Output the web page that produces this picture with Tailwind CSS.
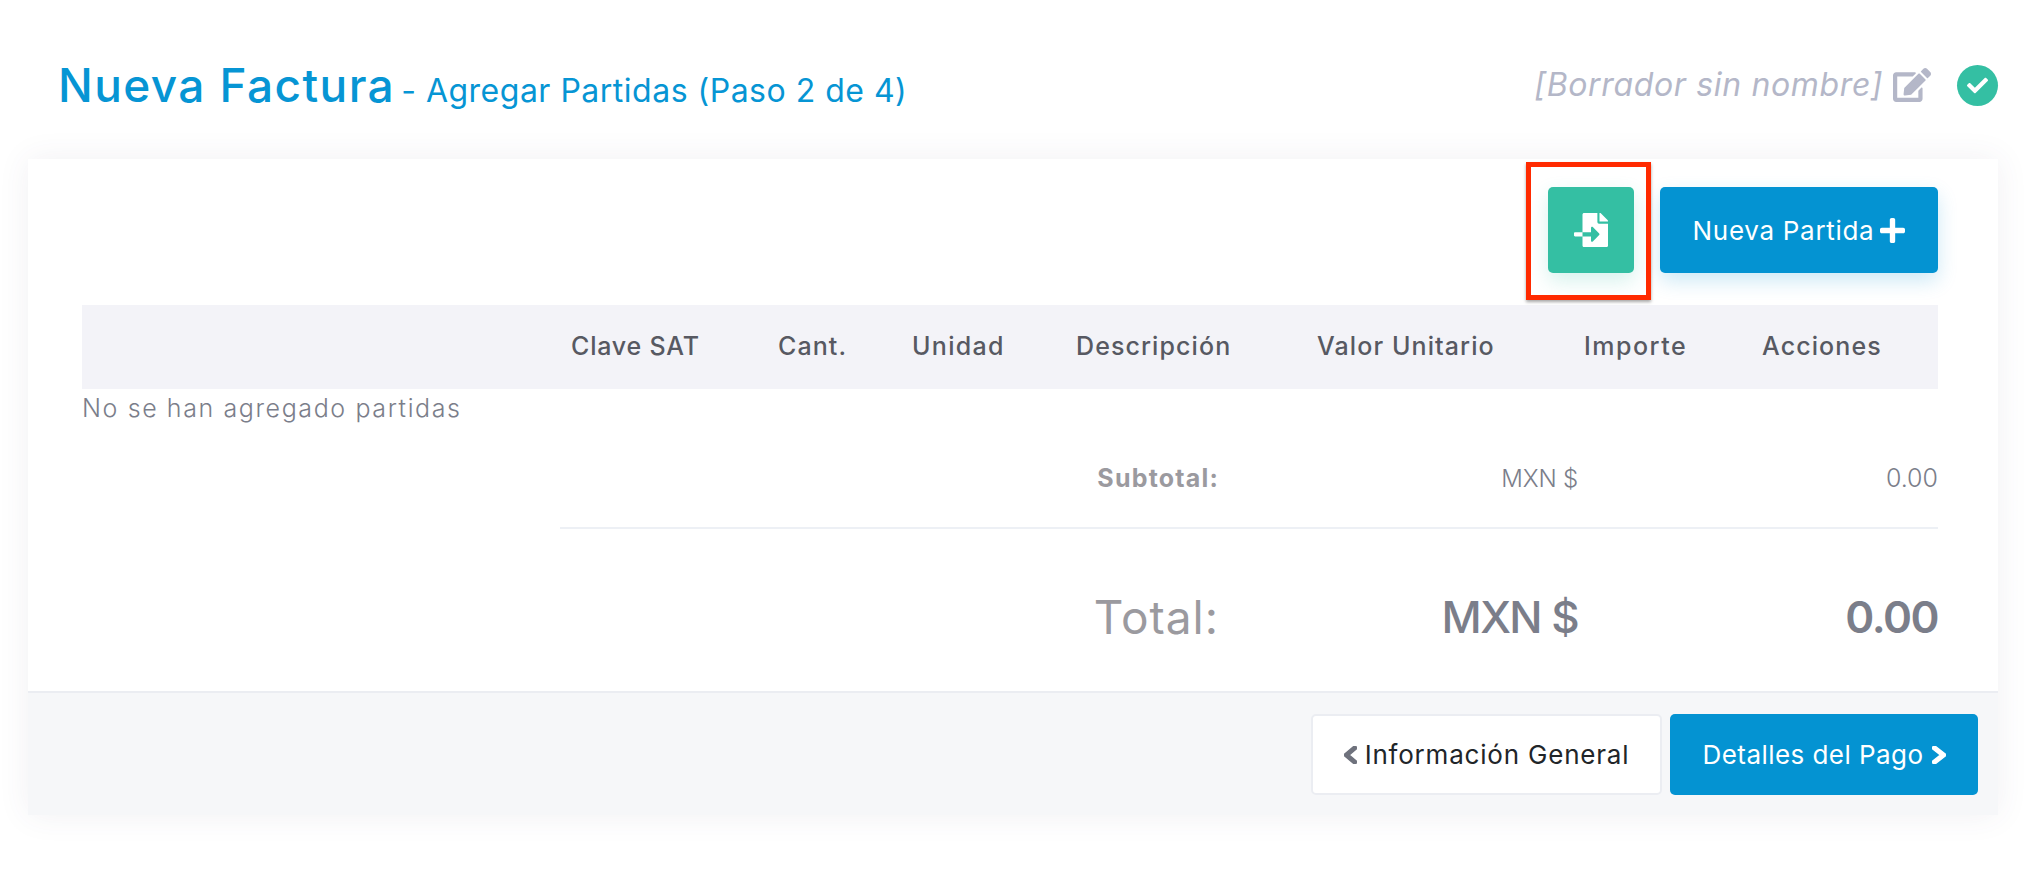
<!DOCTYPE html>
<html lang="es">
<head>
  <meta charset="UTF-8" />
  <title>Nueva Factura</title>
  <script src="https://cdn.jsdelivr.net/npm/@tailwindcss/browser@4"></script>
</head>
<body class="bg-white font-[Inter,sans-serif] relative h-[882px] overflow-hidden">
  <!-- encabezado -->
  <div class="h-[159px] pl-[58px] pr-[40px] pt-[60px] flex items-start justify-between">
    <div class="flex items-baseline text-[#0695d4] h-[50px]">
      <h1 class="text-[46px] leading-[50px] font-medium tracking-[1.4px]">Nueva Factura</h1>
      <span class="text-[32px] ml-[6px] tracking-[0.5px]">- Agregar Partidas (Paso 2 de 4)</span>
    </div>
    <div class="flex items-center h-[50px]">
      <span class="text-[32px] italic text-[#b4b7c8] tracking-[0.65px]">[Borrador sin nombre]</span>
      <svg class="w-[38px] h-[34px] ml-[10px] fill-[#b4b7c8]" viewBox="0 0 576 512"><path d="M402.6 83.2l90.2 90.2c3.8 3.8 3.8 10 0 13.8L274.4 405.6l-92.8 10.3c-12.4 1.4-22.9-9.1-21.5-21.5l10.3-92.8L388.8 83.2c3.8-3.8 10-3.8 13.8 0zm162-22.9l-48.8-48.8c-15.2-15.2-39.9-15.2-55.2 0l-35.4 35.4c-3.8 3.8-3.8 10 0 13.8l90.2 90.2c3.8 3.8 10 3.8 13.8 0l35.4-35.4c15.2-15.3 15.2-40 0-55.2zM384 346.2V448H64V128h229.8c3.2 0 6.2-1.3 8.5-3.5l40-40c7.6-7.6 2.2-20.5-8.5-20.5H48C21.5 64 0 85.5 0 112v352c0 26.5 21.5 48 48 48h352c26.5 0 48-21.5 48-48V306.2c0-10.7-12.9-16-20.5-8.5l-40 40c-2.2 2.3-3.5 5.3-3.5 8.5z"/></svg>
      <span class="w-[41px] h-[41px] ml-[26px] rounded-full bg-[#34bfa3] flex items-center justify-center">
        <svg class="w-[21px] h-[21px] fill-white" viewBox="0 0 512 512"><path d="M173.898 439.404l-166.4-166.4c-9.997-9.997-9.997-26.206 0-36.204l36.203-36.204c9.997-9.998 26.206-9.998 36.204 0L192 312.69 432.095 72.596c9.997-9.997 26.206-9.997 36.204 0l36.203 36.204c9.997 9.997 9.997 26.206 0 36.204l-294.4 294.401c-9.998 9.997-26.207 9.997-36.204-.001z"/></svg>
      </span>
    </div>
  </div>

  <!-- tarjeta -->
  <div class="ml-[28px] w-[1970px] h-[656px] bg-white flex flex-col shadow-[0_0_30px_rgba(82,63,105,0.08)]">
    <div class="h-[534px] pt-[28px] pl-[54px] pr-[60px] border-b-2 border-[#ebedf2]">
      <div class="flex justify-end gap-[26px]">
        <button class="w-[86px] h-[86px] rounded-[5px] bg-[#34bfa3] flex items-center justify-center shadow-[0_8px_20px_rgba(52,191,163,0.2)]">
          <svg class="w-[34px] h-[34px] fill-white" viewBox="0 0 512 512"><path d="M16 288c-8.8 0-16 7.2-16 16v32c0 8.8 7.2 16 16 16h112v-64zm489-183L407.1 7c-4.5-4.5-10.6-7-17-7H384v128h128v-6.1c0-6.3-2.5-12.4-7-16.9zm-153 31V0H152c-13.3 0-24 10.7-24 24v264h128v-65.2c0-14.3 17.3-21.4 27.4-11.3L379 308c6.6 6.7 6.6 17.4 0 24l-95.7 96.4c-10.1 10.1-27.4 3-27.4-11.3V352H128v136c0 13.3 10.7 24 24 24h336c13.3 0 24-10.7 24-24V160H376c-13.2 0-24-10.8-24-24z"/></svg>
        </button>
        <button class="w-[278px] h-[86px] rounded-[5px] bg-[#0493d2] text-white text-[26px] tracking-[0.7px] flex items-center justify-center shadow-[0_8px_20px_rgba(4,147,210,0.2)]">
          <span>Nueva Partida</span>
          <svg class="w-[25px] h-[25px] ml-[6px] fill-white" viewBox="0 32 448 448" preserveAspectRatio="none"><path d="M416 208H272V64c0-17.67-14.33-32-32-32h-32c-17.67 0-32 14.33-32 32v144H32c-17.67 0-32 14.33-32 32v32c0 17.67 14.33 32 32 32h144v144c0 17.67 14.33 32 32 32h32c17.67 0 32-14.33 32-32V304h144c17.67 0 32-14.33 32-32v-32c0-17.67-14.33-32-32-32z"/></svg>
        </button>
      </div>

      <!-- tabla de partidas -->
      <div class="mt-[32px] h-[84px] bg-[#f3f3f8] grid grid-cols-[489px_207px_134px_164px_241px_267px_178px_1fr] items-center text-[25px] tracking-[1.1px] font-medium text-[#575962]">
        <span></span>
        <span class="tracking-[0.8px]">Clave SAT</span>
        <span>Cant.</span>
        <span class="tracking-[1.3px]">Unidad</span>
        <span>Descripción</span>
        <span>Valor Unitario</span>
        <span class="tracking-[1.5px]">Importe</span>
        <span>Acciones</span>
      </div>
      <p class="text-[25px] leading-[38px] tracking-[1.6px] font-light text-[#7b7e8a]">No se han agregado partidas</p>

      <!-- totales -->
      <div class="ml-[478px] h-[102px] pt-[4px] grid grid-cols-[659px_359px_360px] items-center border-b-2 border-[#edf0f5] text-right">
        <span class="text-[25px] font-bold tracking-[1.2px] text-[#9b9a9f]">Subtotal:</span>
        <span class="text-[24px] font-light tracking-[-0.2px] text-[#7b7e8a]">MXN $</span>
        <span class="text-[25px] font-light text-[#7b7e8a]">0.00</span>
      </div>
      <div class="ml-[478px] h-[162px] pt-[14px] grid grid-cols-[659px_359px_360px] items-center text-right">
        <span class="text-[46px] font-normal tracking-[1px] text-[#9b9a9f]">Total:</span>
        <span class="text-[44px] font-medium tracking-[-1.6px] text-[#7b7e8a]">MXN $</span>
        <span class="text-[44px] font-semibold tracking-[-1.5px] text-[#7b7e8a]">0.00</span>
      </div>
    </div>

    <!-- pie -->
    <div class="flex-1 bg-[#f6f7f9] pt-[21px] pr-[20px] flex justify-end gap-[8px]">
      <button class="w-[351px] h-[81px] rounded-[5px] bg-white border-2 border-[#ebedf2] text-[26px] tracking-[0.8px] text-[#212529] flex items-center justify-center">
        <svg class="w-[13px] h-[18px] mr-[8px] fill-[#6f727d] stroke-[#6f727d] stroke-[30px]" viewBox="27 37 266 438" preserveAspectRatio="none"><path d="M34.52 239.03L228.87 44.69c9.37-9.37 24.57-9.37 33.94 0l22.67 22.67c9.36 9.36 9.37 24.52.04 33.9L131.49 256l154.02 154.75c9.34 9.38 9.32 24.54-.04 33.9l-22.67 22.67c-9.37 9.37-24.57 9.37-33.94 0L34.52 272.97c-9.37-9.37-9.37-24.57 0-33.94z"/></svg>
        <span>Información General</span>
      </button>
      <button class="w-[308px] h-[81px] rounded-[5px] bg-[#0493d2] text-[26px] tracking-[0.45px] text-white flex items-center justify-center">
        <span>Detalles del Pago</span>
        <svg class="w-[14px] h-[18px] ml-[8px] fill-white stroke-white stroke-[30px]" viewBox="27 37 266 438" preserveAspectRatio="none"><path d="M285.476 272.971L91.132 467.314c-9.373 9.373-24.569 9.373-33.941 0l-22.667-22.667c-9.357-9.357-9.375-24.522-.04-33.901L188.505 256 34.484 101.255c-9.335-9.379-9.317-24.544.04-33.901l22.667-22.667c9.373-9.373 24.569-9.373 33.941 0L285.475 239.03c9.373 9.372 9.373 24.568.001 33.941z"/></svg>
      </button>
    </div>
  </div>

  <!-- recuadro rojo de anotación -->
  <div class="absolute left-[1526px] top-[162px] w-[125px] h-[138px] border-[5px] border-[#ff2a00] shadow-[0_2px_3px_rgba(0,0,0,0.35)]"></div>
</body>
</html>
